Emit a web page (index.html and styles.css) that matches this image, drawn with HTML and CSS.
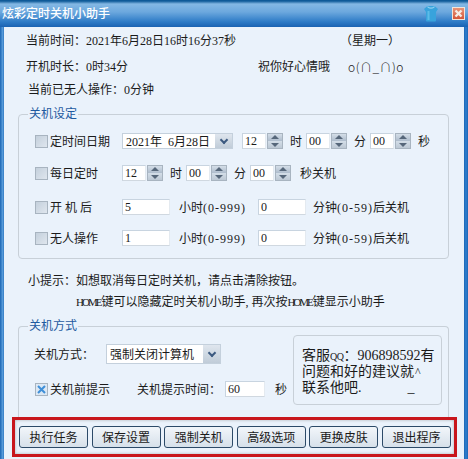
FILE: index.html
```html
<!DOCTYPE html>
<html lang="zh-CN">
<head>
    <meta charset="UTF-8">
    <title>炫彩定时关机小助手</title>
    <link rel="stylesheet" href="styles.css">
</head>
<body>
    <div class="window">
        <div class="titlebar">
            <span class="title">炫彩定时关机小助手</span>
            <svg class="skin-icon" width="16" height="17" viewBox="0 0 16 17">
                <path d="M4.5 1 L11.5 1 L15 4 L13 7 L13 15.5 Q13 16.5 12 16.5 L4 16.5 Q3 16.5 3 15.5 L3 7 L1 4 Z" fill="#38a3dc"/>
                <path d="M4.5 1 Q8 4 11.5 1 L11.5 2.5 Q8 5 4.5 2.5 Z" fill="#8fd0f0"/>
                <path d="M4.5 6 L6.5 6 L6.5 15 L4.5 15 Z" fill="#5cbce8"/>
            </svg>
            <div class="close-btn">
                <svg width="11" height="11" viewBox="0 0 11 11">
                    <path d="M2.5 2.5 L8.5 8.5 M8.5 2.5 L2.5 8.5" stroke="#f6ece6" stroke-width="2.4"/>
                </svg>
            </div>
        </div>

        <div class="content">
            <div class="info-row first">
                <span class="info-time">当前时间：2021年6月28日16时16分37秒</span>
                <span class="info-week">（星期一）</span>
            </div>
            <div class="info-row second">
                <span class="info-time">开机时长：0时34分</span>
                <span class="info-wish">祝你好心情哦</span>
                <span class="info-face">o(∩_∩)o</span>
            </div>
            <div class="info-row third">当前已无人操作：0分钟</div>

            <div class="group group-settings">
                <div class="group-title">关机设定</div>

                <div class="set-row row-date">
                    <span class="check"></span>
                    <span class="check-label">定时间日期</span>
                    <div class="select date-select">
                        <span class="select-text">2021年&nbsp;&nbsp;6月28日</span>
                        <span class="select-arrow"><i></i></span>
                    </div>
                    <span class="field small">12</span><span class="spin"></span>
                    <span class="unit">时</span>
                    <span class="field small">00</span><span class="spin"></span>
                    <span class="unit">分</span>
                    <span class="field small">00</span><span class="spin"></span>
                    <span class="unit">秒</span>
                </div>

                <div class="set-row row-daily">
                    <span class="check"></span>
                    <span class="check-label">每日定时</span>
                    <span class="field small">12</span><span class="spin"></span>
                    <span class="unit">时</span>
                    <span class="field small">00</span><span class="spin"></span>
                    <span class="unit">分</span>
                    <span class="field small">00</span><span class="spin"></span>
                    <span class="unit">秒关机</span>
                </div>

                <div class="set-row row-after">
                    <span class="check"></span>
                    <span class="check-label">开 机 后</span>
                    <span class="field wide">5</span>
                    <span class="unit-long">小时<span class="range">(0-999)</span></span>
                    <span class="field wide">0</span>
                    <span class="unit-end">分钟<span class="range">(0-59)</span>后关机</span>
                </div>

                <div class="set-row row-idle">
                    <span class="check"></span>
                    <span class="check-label">无人操作</span>
                    <span class="field wide">1</span>
                    <span class="unit-long">小时<span class="range">(0-999)</span></span>
                    <span class="field wide">0</span>
                    <span class="unit-end">分钟<span class="range">(0-59)</span>后关机</span>
                </div>
            </div>

            <div class="tip tip-one">小提示：如想取消每日定时关机，请点击清除按钮。</div>
            <div class="tip tip-two"><span class="home">HOME</span>键可以隐藏定时关机小助手, 再次按<span class="home">HOME</span>键显示小助手</div>

            <div class="group group-mode">
                <div class="group-title">关机方式</div>
                <div class="mode-left">
                    <div class="mode-row">
                        <span class="mode-label">关机方式：</span>
                        <div class="select mode-select">
                            <span class="select-text">强制关闭计算机</span>
                            <span class="select-arrow"><i></i></span>
                        </div>
                    </div>
                    <div class="mode-row mode-row-two">
                        <span class="check checked">
                            <svg width="11" height="11" viewBox="0 0 11 11">
                                <path d="M2 2 L9 9 M9 2 L2 9" stroke="#3f8fd8" stroke-width="2"/>
                            </svg>
                        </span>
                        <span class="check-label">关机前提示</span>
                        <span class="notice-label">关机提示时间：</span>
                        <span class="field notice-field">60</span>
                        <span class="unit">秒</span>
                    </div>
                </div>
                <div class="service-box">客服<span class="qq">QQ</span>：906898592有<br>问题和好的建议就<span class="caret">^</span><br>联系他吧.<span class="smile">_</span></div>
            </div>

            <div class="action-bar">
                <button class="btn">执行任务</button>
                <button class="btn">保存设置</button>
                <button class="btn">强制关机</button>
                <button class="btn">高级选项</button>
                <button class="btn">更换皮肤</button>
                <button class="btn">退出程序</button>
            </div>
        </div>
    </div>
</body>
</html>
```

FILE: styles.css
```css
* {
    margin: 0;
    padding: 0;
    box-sizing: border-box;
}

body {
    width: 468px;
    height: 459px;
    overflow: hidden;
    font-family: "Liberation Serif", "Noto Sans CJK SC", serif;
    font-size: 12px;
    color: #1a1a1a;
}

.window {
    width: 468px;
    height: 459px;
    display: flex;
    flex-direction: column;
    background: linear-gradient(90deg, #1c66b4 0, #5fa3e0 3px, #1c66b4 4px, #1c66b4 464px, #2f7fd0 466px, #1c66b4 468px);
}

.titlebar {
    height: 27px;
    flex: none;
    display: flex;
    align-items: center;
    padding: 0 3px 0 2px;
    background: linear-gradient(#0f5a98 0, #0f5a98 1px, #84b8e4 4px, #6ca8de 12px, #2c7ac6 22px, #1a62b2 27px);
}

.title {
    color: #fff;
    font-size: 12px;
    line-height: 16px;
    font-weight: 500;
}

.skin-icon {
    margin-left: auto;
    margin-top: -1px;
}

.close-btn {
    width: 13px;
    height: 13px;
    margin: -1px 0 0 13px;
    background: linear-gradient(#e89478, #d4563a);
    border: 1px solid #f4e4d8;
    display: flex;
    align-items: center;
    justify-content: center;
}

.close-btn svg {
    flex: none;
}

.content {
    flex: 1;
    margin: 0 4px;
    background: #eaf2fb;
}

.info-row {
    display: flex;
    line-height: 16px;
}

.info-row.first {
    margin-top: 6px;
    padding-left: 22px;
}

.info-row.second {
    margin-top: 10px;
    padding-left: 22px;
}

.info-row.third {
    margin-top: 7px;
    padding-left: 24px;
}

.info-time {
    width: 348px;
    white-space: nowrap;
}

.info-row.second .info-time {
    width: 232px;
}

.info-week {
    margin-left: -34px;
}

.info-face {
    margin-left: 18px;
    font-family: "Noto Sans CJK SC", sans-serif;
    font-weight: 300;
    letter-spacing: 0.5px;
}

.group {
    margin: 16px 15px 0 14px;
    border: 1px solid #c8d0d8;
    border-radius: 4px;
    position: relative;
}

.group-settings {
    height: 145px;
    padding-top: 18px;
}

/* bottom edge of this group sits under the red action bar */
.group-mode {
    height: 91px;
    margin-top: 16px;
    display: flex;
    border-bottom: none;
    border-radius: 4px 4px 0 0;
}

.group-title {
    position: absolute;
    top: -9px;
    left: 9px;
    padding: 0 1px;
    line-height: 16px;
    color: #1f5aa0;
    background: #eaf2fb;
}

.set-row {
    display: flex;
    align-items: center;
    height: 16px;
    padding-left: 16px;
    white-space: nowrap;
}

.row-daily {
    margin-top: 16px;
}

.row-after {
    margin-top: 18px;
}

.row-idle {
    margin-top: 15px;
}

.check {
    width: 13px;
    height: 13px;
    flex: none;
    background: linear-gradient(135deg, #c4d0dc, #dfe6ee);
    border: 1px solid #a8b4c0;
    display: flex;
    align-items: center;
    justify-content: center;
}

.check svg {
    flex: none;
}

.check.checked {
    background: #dce8f4;
}

.check-label {
    width: 72px;
    margin-left: 2px;
}

.field {
    height: 16px;
    flex: none;
    background: #fff;
    border: 1px solid #c8d4e0;
    border-right-color: #e4eaf0;
    border-bottom-color: #d0d8e0;
    padding-left: 2px;
    line-height: 14px;
}

.field.small {
    width: 24px;
}

.field.wide {
    width: 48px;
}

.spin {
    width: 16px;
    height: 16px;
    flex: none;
    margin-left: 1px;
    position: relative;
    background: linear-gradient(#d4dee8, #aebccc 50%, #d4dee8 50%, #bcc8d4);
    border: 1px solid #a8b4c0;
}

.spin::before,
.spin::after {
    content: "";
    position: absolute;
    left: 3px;
    border-left: 4px solid transparent;
    border-right: 4px solid transparent;
}

.spin::before {
    top: 1px;
    border-bottom: 4px solid #56677a;
}

.spin::after {
    bottom: 1px;
    border-top: 4px solid #56677a;
}

.unit {
    width: 12px;
    margin: 0 4px 0 7px;
    flex: none;
}

.row-daily .unit:last-child {
    width: auto;
    margin-left: 9px;
}

.unit-long {
    width: 88px;
    padding-left: 9px;
}

.unit-end {
    padding-left: 7px;
}

.range {
    letter-spacing: 1px;
}

.select {
    display: flex;
    align-items: center;
    justify-content: space-between;
    background: #fff;
    border: 1px solid #c4d0dc;
    flex: none;
}

.date-select {
    width: 111px;
    height: 16px;
    margin-right: 9px;
    padding-left: 3px;
}

.mode-select {
    width: 115px;
    height: 20px;
    margin-left: 12px;
    padding-left: 3px;
}

.select-arrow {
    width: 17px;
    height: 100%;
    flex: none;
    display: flex;
    align-items: center;
    justify-content: center;
    background: linear-gradient(#dfe6ee, #c0ccd8);
}

.select-arrow i {
    width: 6px;
    height: 6px;
    margin-top: -3px;
    border-right: 2px solid #3c5a80;
    border-bottom: 2px solid #3c5a80;
    transform: rotate(45deg);
}

.tip {
    line-height: 16px;
    white-space: nowrap;
}

.tip-one {
    margin-top: 14px;
    padding-left: 24px;
}

.tip-two {
    margin-top: 5px;
    padding-left: 72px;
}

.home {
    font-size: 11px;
    letter-spacing: -2px;
    margin-right: 1px;
}

.mode-left {
    width: 274px;
    flex: none;
    padding: 17px 0 0 15px;
}

.mode-row {
    display: flex;
    align-items: center;
    height: 20px;
    white-space: nowrap;
}

.mode-label {
    width: 60px;
}

.mode-row-two {
    margin-top: 15px;
    padding-left: 1px;
}

.notice-label {
    margin-left: 15px;
    width: 88px;
}

.notice-field {
    width: 40px;
}

.mode-row-two .unit {
    margin-left: 10px;
}

.service-box {
    width: 149px;
    height: 70px;
    margin-top: 8px;
    padding: 12px 0 0 8px;
    border: 1px solid #c8d0d8;
    border-radius: 4px;
    font-size: 14px;
    line-height: 15px;
    white-space: nowrap;
}

.qq {
    font-size: 10px;
    letter-spacing: -0.5px;
}

.caret {
    margin-left: 1px;
    font-size: 12px;
}

.smile {
    margin-left: 46px;
}

.action-bar {
    width: 445px;
    height: 40px;
    margin-left: 8px;
    border: 3px solid #c8161c;
    box-shadow: inset 0 0 3px rgba(90, 90, 90, 0.45);
    display: flex;
    align-items: center;
    gap: 3.6px;
    padding-left: 4px;
}

.btn {
    width: 69px;
    height: 22px;
    flex: none;
    font: inherit;
    font-size: 12px;
    color: #1a1a1a;
    background: linear-gradient(#f2f6fa, #d6e0ea);
    border: 1px solid #2c4a68;
    border-radius: 3px;
}
```
